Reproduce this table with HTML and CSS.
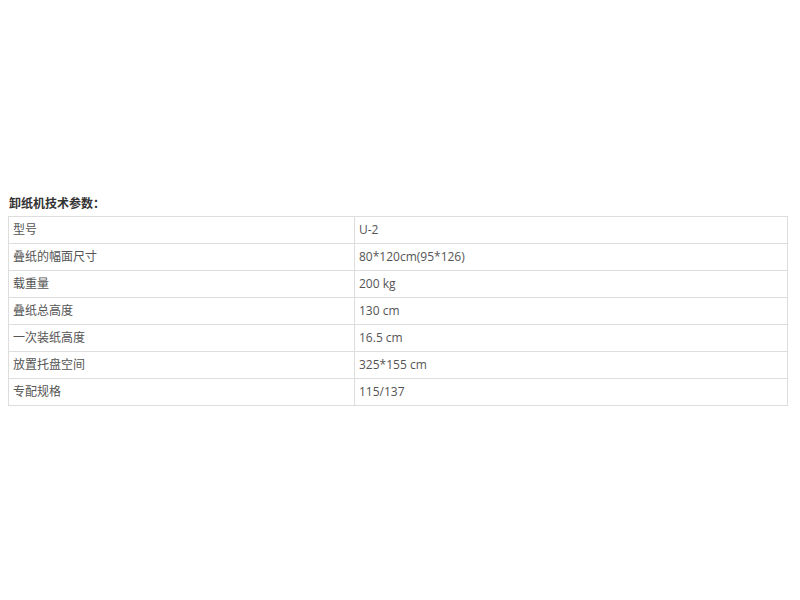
FILE: index.html
```html
<!DOCTYPE html>
<html lang="zh">
<head>
<meta charset="utf-8">
<title>卸纸机技术参数</title>
<link rel="stylesheet" href="styles.css">
</head>
<body>
<div class="content">
  <p class="title">卸纸机技术参数：</p>
  <table class="spec">
    <tr><td class="name">型号</td><td>U-2</td></tr>
    <tr><td class="name">叠纸的幅面尺寸</td><td>80*120cm(95*126)</td></tr>
    <tr><td class="name">载重量</td><td>200 kg</td></tr>
    <tr><td class="name">叠纸总高度</td><td>130 cm</td></tr>
    <tr><td class="name">一次装纸高度</td><td>16.5 cm</td></tr>
    <tr><td class="name">放置托盘空间</td><td>325*155 cm</td></tr>
    <tr><td class="name">专配规格</td><td>115/137</td></tr>
  </table>
</div>
</body>
</html>
```
FILE: styles.css
```css
html, body {
  margin: 0;
  padding: 0;
  background: #fff;
}
body {
  font-family: "Segoe UI", "Open Sans", "Noto Sans CJK SC", sans-serif;
  font-size: 12px;
  color: #555;
}
.content {
  padding: 195px 12px 0 8px;
}
.title {
  margin: 0 0 5px 1px;
  font-weight: bold;
  color: #333;
  font-size: 12px;
  line-height: 16px;
  font-family: "Noto Sans CJK SC", sans-serif;
}
.spec {
  width: 100%;
  border-collapse: collapse;
  table-layout: fixed;
}
.spec td {
  border: 1px solid #ddd;
  height: 27px;
  padding: 0 4px;
  box-sizing: border-box;
  vertical-align: middle;
  font-size: 12px;
  line-height: 16px;
}
.spec td.name {
  width: 346px;
}
```
